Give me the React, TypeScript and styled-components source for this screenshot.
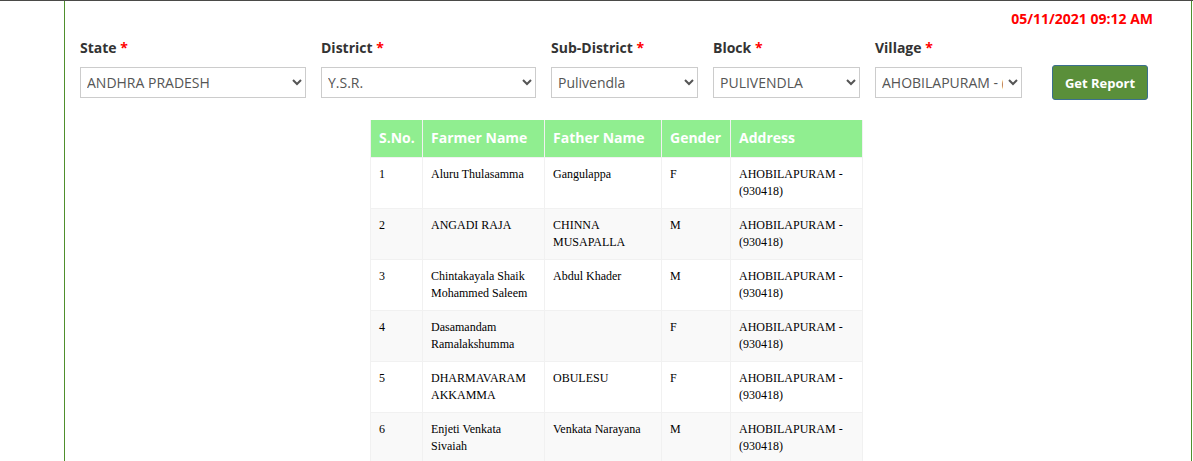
import React from 'react'
import styled, { createGlobalStyle } from 'styled-components'

const GlobalStyle = createGlobalStyle`
  html, body {
    margin: 0;
    padding: 0;
    background: #ffffff;
  }
  body {
    font-family: "Open Sans", "Liberation Sans", sans-serif;
  }
`

const Page = styled.div`
  border-top: 1px solid #4a4a48;
  height: 460px;
  overflow: hidden;
`

const Panel = styled.section`
  margin-left: 64px;
  width: 1126px;
  height: 100%;
  border-left: 1px solid #4f8f2d;
  border-right: 1px solid #4f8f2d;
`

const DateLine = styled.div`
  display: flex;
  justify-content: flex-end;
  padding: 8px 38px 0 0;
  height: 23px;
  font-size: 14px;
  font-weight: 700;
  color: #ff0000;
`

const FilterRow = styled.div`
  display: flex;
  align-items: flex-end;
  gap: 15px;
  padding: 6px 0 0 15px;
`

const Field = styled.div<{ w: number }>`
  display: flex;
  flex-direction: column;
  width: ${p => p.w}px;
`

const Label = styled.label`
  font-size: 14px;
  font-weight: 700;
  color: #333333;
  line-height: 20px;
  margin-bottom: 9px;
`

const Star = styled.span`
  color: #ff0000;
`

const Select = styled.select`
  height: 31px;
  width: 100%;
  border: 1px solid #cccccc;
  border-radius: 0;
  background: #ffffff;
  color: #555555;
  font-family: "Open Sans", "Liberation Sans", sans-serif;
  font-size: 14px;
  padding: 0 2px;
  outline: none;
`

const ReportButton = styled.button`
  margin-left: 15px;
  margin-bottom: -2px;
  width: 96px;
  height: 35px;
  background: #5a8f3a;
  border: 1px solid #3b6f8f;
  border-radius: 3px;
  color: #ffffff;
  font-family: "Open Sans", "Liberation Sans", sans-serif;
  font-size: 13px;
  font-weight: 700;
`

const TableWrap = styled.div`
  display: flex;
  padding: 22px 0 0 305px;
`

const Table = styled.table`
  border-collapse: collapse;
  width: 492px;
  table-layout: fixed;
`

const HeadCell = styled.th<{ w: number }>`
  box-sizing: border-box;
  width: ${p => p.w}px;
  background: #90ee90;
  color: #ffffff;
  font-size: 14px;
  font-weight: 700;
  text-align: left;
  line-height: 20px;
  padding: 8px 8px 9px 8px;
  border: 1px solid #f1f1f1;
  border-top: 0;
  white-space: nowrap;
`

const Row = styled.tr<{ striped: boolean }>`
  background: ${p => (p.striped ? '#f9f9f9' : '#ffffff')};
`

const Cell = styled.td`
  box-sizing: border-box;
  font-family: "Liberation Serif", "Times New Roman", serif;
  font-size: 12px;
  color: #000000;
  line-height: 17px;
  height: 51px;
  vertical-align: top;
  padding: 8px;
  border: 1px solid #f1f1f1;
`

const fields = [
  { label: 'State', w: 226, value: 'ANDHRA PRADESH' },
  { label: 'District', w: 215, value: 'Y.S.R.' },
  { label: 'Sub-District', w: 147, value: 'Pulivendla' },
  { label: 'Block', w: 147, value: 'PULIVENDLA' },
  { label: 'Village', w: 147, value: 'AHOBILAPURAM - (930418)' },
]

const columns = [
  { title: 'S.No.', w: 52 },
  { title: 'Farmer Name', w: 122 },
  { title: 'Father Name', w: 117 },
  { title: 'Gender', w: 69 },
  { title: 'Address', w: 132 },
]

const farmers = [
  ['1', 'Aluru Thulasamma', 'Gangulappa', 'F'],
  ['2', 'ANGADI RAJA', 'CHINNA MUSAPALLA', 'M'],
  ['3', 'Chintakayala Shaik Mohammed Saleem', 'Abdul Khader', 'M'],
  ['4', 'Dasamandam Ramalakshumma', '', 'F'],
  ['5', 'DHARMAVARAM AKKAMMA', 'OBULESU', 'F'],
  ['6', 'Enjeti Venkata Sivaiah', 'Venkata Narayana', 'M'],
]

export default function App() {
  return (
    <Page>
      <GlobalStyle />
      <Panel>
        <DateLine>05/11/2021 09:12 AM</DateLine>
        <FilterRow>
          {fields.map(f => (
            <Field key={f.label} w={f.w}>
              <Label>
                {f.label} <Star>*</Star>
              </Label>
              <Select defaultValue={f.value}>
                <option>{f.value}</option>
              </Select>
            </Field>
          ))}
          <ReportButton>Get Report</ReportButton>
        </FilterRow>
        <TableWrap>
          <Table>
            <thead>
              <tr>
                {columns.map(c => (
                  <HeadCell key={c.title} w={c.w}>
                    {c.title}
                  </HeadCell>
                ))}
              </tr>
            </thead>
            <tbody>
              {farmers.map((r, i) => (
                <Row key={r[0]} striped={i % 2 === 1}>
                  <Cell>{r[0]}</Cell>
                  <Cell>{r[1]}</Cell>
                  <Cell>{r[2]}</Cell>
                  <Cell>{r[3]}</Cell>
                  <Cell>AHOBILAPURAM - (930418)</Cell>
                </Row>
              ))}
            </tbody>
          </Table>
        </TableWrap>
      </Panel>
    </Page>
  )
}
